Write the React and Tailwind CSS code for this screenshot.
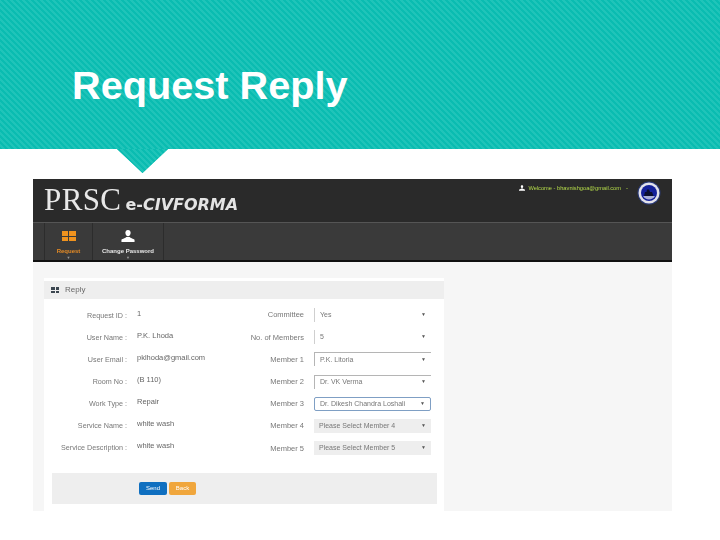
const leftRows = [
  ['Request ID :', '1'],
  ['User Name :', 'P.K. Lhoda'],
  ['User Email :', 'pklhoda@gmail.com'],
  ['Room No :', '(B 110)'],
  ['Work Type :', 'Repair'],
  ['Service Name :', 'white wash'],
  ['Service Description :', 'white wash'],
];

// kind: plain = no border, line = grey border, focus = blue border, off = disabled grey
const rightRows = [
  ['Committee', 'Yes', 'plain'],
  ['No. of Members', '5', 'plain'],
  ['Member 1', 'P.K. Litoria', 'line'],
  ['Member 2', 'Dr. VK Verma', 'line'],
  ['Member 3', 'Dr. Dikesh Chandra Loshali', 'focus'],
  ['Member 4', 'Please Select Member 4', 'off'],
  ['Member 5', 'Please Select Member 5', 'off'],
];

const selectStyles = {
  plain: 'border-l border-l-[#cfcfcf] bg-white',
  line: 'border-l border-t border-[#b5b5b5] bg-white',
  focus: 'border border-[#7f9fc4] rounded-[2px] bg-white',
  off: 'bg-[#eeeeee]',
};

function Bust({ w, h }) {
  return (
    <svg width={w} height={h} viewBox="0 0 24 22" fill="#ffffff">
      <path d="M12 0C8.8 0 7.2 2.2 7.2 5.2c0 3 1.6 6.3 4.8 6.3s4.8-3.3 4.8-6.3C16.800 2.200 15.200 0 12 0z" />
      <path d="M0 22v-3.500c0-2 6.500-2.800 9-5.500h6c2.500 2.700 9 3.500 9 5.500V22z" />
    </svg>
  );
}

function Grid4() {
  return (
    <div className="grid grid-cols-2 gap-px w-[14px] h-[10px]">
      <span className="bg-[#f0931e]" />
      <span className="bg-[#f0931e]" />
      <span className="bg-[#f0931e]" />
      <span className="bg-[#f0931e]" />
    </div>
  );
}

function Emblem() {
  return (
    <svg width="24" height="24" viewBox="0 0 24 24">
      <circle cx="12" cy="12" r="11.5" fill="#2a3a78" />
      <circle cx="12" cy="12" r="10.5" fill="#e2e2ea" />
      <circle cx="12" cy="12" r="8" fill="#14209a" />
      <path d="M7 15h9.5l-1.5-4h-2l-1-2.5h-2l-.5 2.500H8z" fill="#0c1030" />
      <path d="M6 15h12a7 7 0 0 1-12 0z" fill="#aab0d8" />
    </svg>
  );
}

export default function App() {
  return (
    <div className="relative w-[720px] h-[540px] bg-white overflow-hidden font-['Liberation_Sans',Arial,sans-serif]">
      <header className="h-[149px] pl-[72px] pt-[60px] bg-[#0fbfb3] bg-[repeating-linear-gradient(45deg,#0abcb1_0px,#0abcb1_2.1213px,#1fc4b9_2.1213px,#1fc4b9_4.2426px)]">
        <h1 className="text-[39.7px] leading-[50px] font-bold text-white">Request Reply</h1>
      </header>
      <div className="absolute left-[117px] top-[149px] w-[51px] h-[24px] [clip-path:polygon(0_0,100%_0,50%_100%)] bg-[#0fbfb3] bg-[repeating-linear-gradient(45deg,#0abcb1_0px,#0abcb1_2.1213px,#1fc4b9_2.1213px,#1fc4b9_4.2426px)]" />

      <main className="mt-[30px] ml-[33px] w-[639px] h-[332px] flex flex-col bg-[#f6f6f6] overflow-hidden blur-[0.35px]">
        <div className="h-[43px] shrink-0 bg-[#2a2a2a] flex justify-between pl-[11px] pr-[11px]">
          <div className="flex items-baseline pt-[3px]">
            <span className="font-['Liberation_Serif',serif] text-[31px] leading-[36px] text-[#e8e8e8] tracking-[0.4px]">PRSC</span>
            <span className="ml-[4px] font-['DejaVu_Sans',sans-serif] font-bold text-[16px] text-[#e4e4e4]">e-<i>CIVFORMA</i></span>
          </div>
          <div className="flex items-start">
            <div className="flex items-center gap-[3px] mt-[3px] mr-[9px]">
              <Bust w={6} h={6} />
              <span className="text-[5.7px] leading-[12px] text-[#b5dc4a]">Welcome - bhavnishgoa@gmail.com</span>
              <span className="text-[6px] leading-[12px] text-[#b5dc4a] ml-[2px]">-</span>
            </div>
            <div className="mt-[2px]"><Emblem /></div>
          </div>
        </div>

        <nav className="h-[40px] shrink-0 flex pl-[11px] bg-[#3a3a3a] border-t border-[#555555] border-b-2 border-b-[#111111]">
          <div className="w-[49px] flex flex-col items-center pt-[8px] border-x border-[#2c2c2c]">
            <Grid4 />
            <span className="mt-[6px] text-[6px] leading-[8px] font-bold text-[#e58b25]">Request</span>
            <span className="mt-[1px] text-[4px] leading-[4px] text-[#999999]">▼</span>
          </div>
          <div className="w-[71px] flex flex-col items-center pt-[7px] border-r border-[#2c2c2c]">
            <Bust w={14} h={12} />
            <span className="mt-[5px] text-[6px] leading-[8px] font-bold text-[#e8e8e8]">Change Password</span>
            <span className="mt-[1px] text-[4px] leading-[4px] text-[#999999]">▼</span>
          </div>
        </nav>

        <section className="ml-[11px] mt-[16px] w-[400px] flex-1 bg-white flex flex-col">
          <div className="mt-[3px] h-[18px] shrink-0 bg-[#eeeeee] flex items-center pl-[7px] gap-[6px]">
            <div className="grid grid-cols-2 gap-px w-[8px] h-[6px]">
              <span className="bg-[#3c4650]" />
              <span className="bg-[#3c4650]" />
              <span className="bg-[#3c4650]" />
              <span className="bg-[#3c4650]" />
            </div>
            <span className="text-[8px] text-[#6a6a6a]">Reply</span>
          </div>

          <div className="flex mt-[6px] h-[168px]">
            <div className="w-[200px] flex flex-col pt-[1px] gap-[2px]">
              {leftRows.map(([label, value]) => (
                <div key={label} className="h-[20px] flex items-center">
                  <span className="w-[83px] shrink-0 text-right text-[7.2px] text-[#777777] whitespace-nowrap">{label}</span>
                  <span className="ml-[10px] -mt-[4px] text-[7.5px] text-[#666666] whitespace-nowrap">{value}</span>
                </div>
              ))}
            </div>
            <div className="flex-1 flex flex-col gap-[2.2px]">
              {rightRows.map(([label, value, kind]) => (
                <div key={label} className="h-[20px] flex items-center">
                  <span className="w-[60px] shrink-0 text-right text-[7.5px] text-[#777777] whitespace-nowrap">{label}</span>
                  <div className={`ml-[10px] w-[117px] h-[14px] flex items-center justify-between pl-[5px] pr-[5px] ${selectStyles[kind]}`}>
                    <span className="text-[7px] text-[#777777] whitespace-nowrap">{value}</span>
                    <span className="text-[5px] text-[#555555]">▼</span>
                  </div>
                </div>
              ))}
            </div>
          </div>

          <div className="ml-[8px] mr-[7px] h-[31px] bg-[#eeeeee] flex items-center justify-center gap-[2px] pr-[154px]">
            <button className="w-[28px] h-[13px] rounded-[2px] bg-[#0f6fc0] text-[6px] text-white">Send</button>
            <button className="w-[27px] h-[13px] rounded-[2px] bg-[#f0a63c] text-[6px] text-white">Back</button>
          </div>
        </section>
      </main>
    </div>
  );
}
